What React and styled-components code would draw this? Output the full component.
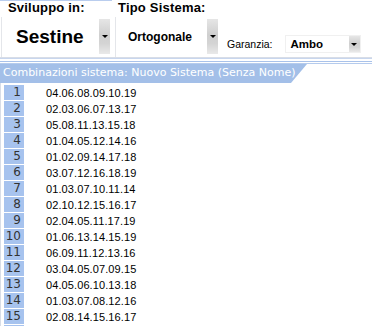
import React from 'react';
import styled, { createGlobalStyle } from 'styled-components';

const GlobalStyle = createGlobalStyle`
  html, body {
    margin: 0;
    padding: 0;
    background: #ffffff;
  }
  body {
    width: 372px;
    height: 326px;
    overflow: hidden;
    font-family: "Liberation Sans", Arial, sans-serif;
  }
`;

const Window = styled.div`
  display: flex;
  flex-direction: column;
  width: 372px;
  height: 326px;
  background: #fff;
  overflow: hidden;
`;

const Toolbar = styled.div`
  display: flex;
  align-items: stretch;
  flex-shrink: 0;
  height: 58px;
  border-bottom: 1px solid #d8dde6;
  box-sizing: border-box;
`;

const Group = styled.div`
  display: flex;
  flex-direction: column;
  width: ${p => p.width}px;
  margin-left: ${p => p.offset || 0}px;
  border-top: 1px solid ${p => (p.active ? '#b9cdee' : 'transparent')};
`;

const GroupLabel = styled.div`
  height: 16px;
  padding-left: ${p => p.indent || 0}px;
  font-size: 13px;
  font-weight: bold;
  letter-spacing: 0.2px;
  line-height: 14px;
  color: #000;
`;

const ComboFrame = styled.div`
  flex: 1;
  display: flex;
  align-items: stretch;
  margin-left: 1px;
  padding: 2px 2px 3px 0;
  border-left: 1px solid #e4e6ea;
`;

const ComboText = styled.div`
  flex: 1;
  display: flex;
  align-items: center;
  padding-left: ${p => p.indent}px;
  font-size: ${p => p.size}px;
  font-weight: bold;
  color: #000;
`;

const DropButton = styled.div`
  width: 11px;
  display: flex;
  align-items: center;
  justify-content: center;
  background: linear-gradient(to bottom, #e6e6e6 0%, #cfcfcf 45%, #d4d4d4 70%, #e9e9e9 100%);

  &::after {
    content: '';
    border-left: 3px solid transparent;
    border-right: 3px solid transparent;
    border-top: 3px solid #000;
  }
`;

const Guarantee = styled.div`
  display: flex;
  align-items: flex-end;
  padding: 0 0 4px 7px;
  gap: 12px;
`;

const SmallLabel = styled.span`
  font-size: 10.5px;
  color: #000;
  padding-bottom: 3px;
`;

const SmallCombo = styled.div`
  display: flex;
  width: 74px;
  height: 16px;
  border: 1px solid #f0f0f0;
`;

const Separator = styled.div`
  flex-shrink: 0;
  height: 4px;
  border-top: 1px solid #c8d6ee;
  border-bottom: 1px solid #a9c2ea;
  box-sizing: border-box;
`;

const TabStrip = styled.div`
  display: flex;
  flex-shrink: 0;
  height: 19px;
  margin-top: 1px;
  border-top: 1px solid #b5cbed;
`;

const Tab = styled.div`
  width: 304px;
  padding-left: 3px;
  font-family: "DejaVu Sans", Verdana, sans-serif;
  font-size: 11px;
  line-height: 18px;
  color: #fff;
  background: #a3bfe8;
  clip-path: polygon(0 0, 100% 0, calc(100% - 16px) 100%, 0 100%);
  white-space: nowrap;
  overflow: hidden;
`;

const List = styled.div`
  display: flex;
  flex-direction: column;
  gap: 1px;
  padding: 2px 0 0 1px;
  border-left: 1px solid #d8dde6;
  flex: 1;
  min-height: 0;
  overflow: hidden;
`;

const Row = styled.div`
  display: flex;
  align-items: center;
  flex-shrink: 0;
  height: 15px;
`;

const IndexCell = styled.div`
  width: 20px;
  height: 15px;
  margin-left: 2px;
  padding-right: 3px;
  box-sizing: border-box;
  background: #a7c3ee;
  color: #333;
  font-family: "DejaVu Sans", Verdana, sans-serif;
  font-size: 12px;
  line-height: 15px;
  text-align: right;
`;

const Combo = styled.div`
  padding-left: 22px;
  font-size: 11px;
  color: #000;
  letter-spacing: 0.1px;
`;

const combos = [
  '04.06.08.09.10.19',
  '02.03.06.07.13.17',
  '05.08.11.13.15.18',
  '01.04.05.12.14.16',
  '01.02.09.14.17.18',
  '03.07.12.16.18.19',
  '01.03.07.10.11.14',
  '02.10.12.15.16.17',
  '02.04.05.11.17.19',
  '01.06.13.14.15.19',
  '06.09.11.12.13.16',
  '03.04.05.07.09.15',
  '04.05.06.10.13.18',
  '01.03.07.08.12.16',
  '02.08.14.15.16.17',
];

export default function App() {
  return (
    <Window>
      <GlobalStyle />
      <Toolbar>
        <Group width={112} active>
          <GroupLabel indent={8}>Sviluppo in:</GroupLabel>
          <ComboFrame>
            <ComboText indent={14} size={19}>Sestine</ComboText>
            <DropButton />
          </ComboFrame>
        </Group>
        <Group width={106} offset={2}>
          <GroupLabel indent={4}>Tipo Sistema:</GroupLabel>
          <ComboFrame>
            <ComboText indent={12} size={12}>Ortogonale</ComboText>
            <DropButton />
          </ComboFrame>
        </Group>
        <Guarantee>
          <SmallLabel>Garanzia:</SmallLabel>
          <SmallCombo>
            <ComboText indent={5} size={11.5}>Ambo</ComboText>
            <DropButton />
          </SmallCombo>
        </Guarantee>
      </Toolbar>
      <Separator />
      <TabStrip>
        <Tab>Combinazioni sistema: Nuovo Sistema (Senza Nome)</Tab>
      </TabStrip>
      <List>
        {combos.map((c, i) => (
          <Row key={i}>
            <IndexCell>{i + 1}</IndexCell>
            <Combo>{c}</Combo>
          </Row>
        ))}
        {/* next row only peeks in at the bottom edge */}
        <Row>
          <IndexCell />
        </Row>
      </List>
    </Window>
  );
}
